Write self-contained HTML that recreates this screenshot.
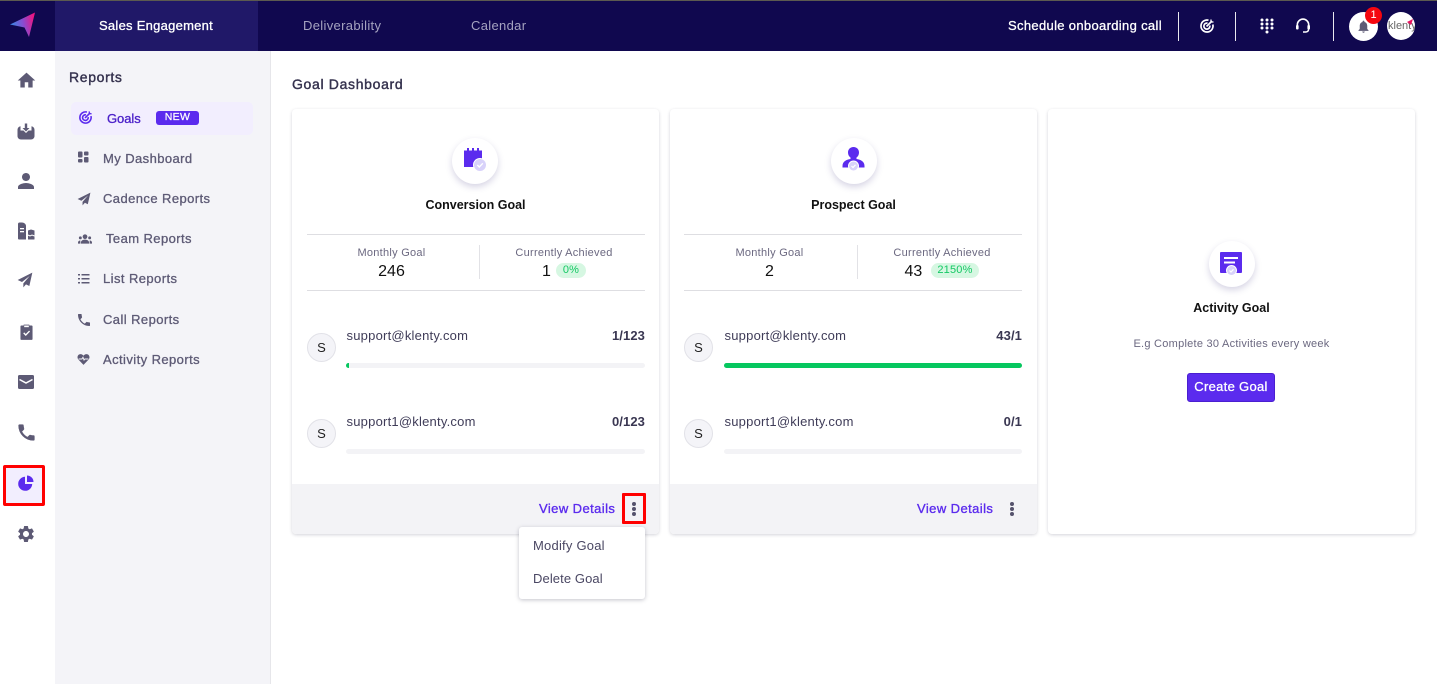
<!DOCTYPE html>
<html><head><meta charset="utf-8"><style>
html,body{margin:0;padding:0}
body{width:1437px;height:684px;position:relative;overflow:hidden;background:#fff;font-family:"Liberation Sans",sans-serif;color:#3a3752}
.a,.t{position:absolute}
.t{white-space:nowrap;line-height:16px}
svg{position:absolute;display:block}
.nav{font-size:13px;color:#5d5a75;letter-spacing:.42px;-webkit-text-stroke:.3px #5d5a75}
.card{position:absolute;top:109px;width:367px;height:425px;background:#fff;border-radius:4px;box-shadow:0 1px 3px rgba(40,40,70,.2);overflow:hidden}
.foot{position:absolute;left:0;right:0;top:375px;height:50px;background:#f3f3f6}
.hl{position:absolute;height:1px;background:#dedee2;width:338px}
.circ{position:absolute;width:46px;height:46px;border-radius:50%;background:#fff;box-shadow:0 3px 7px rgba(70,60,130,.22)}
.av{position:absolute;width:27px;height:27px;border:1px solid #e2e2e8;border-radius:50%;background:#f4f4f8;color:#222;font-size:13px;text-align:center;line-height:27px}
.bar{position:absolute;height:5px;border-radius:3px;background:#f3f3f6;overflow:hidden}
.mail{font-size:13px;color:#3f3c58;letter-spacing:.22px}
.ct{font-size:13px;font-weight:700;color:#3a3752;letter-spacing:.1px;text-align:right;right:14px}
.lb{font-size:11px;color:#6b6880;letter-spacing:.27px;text-align:center}
.nm{font-size:16px;color:#111;letter-spacing:0;text-align:center}
.ttl{font-size:12.5px;font-weight:700;color:#111;letter-spacing:0;text-align:center;left:0;right:0}
.vd{font-size:13px;color:#5b2bee;letter-spacing:.42px;-webkit-text-stroke:.35px #5b2bee}
.pill{position:absolute;height:15px;border-radius:8px;background:#d6f7e2;color:#14c864;font-size:11px;text-align:center;line-height:15px;letter-spacing:.2px}
.dot{position:absolute;width:4px;height:4px;border-radius:50%;background:#55526c}
</style></head><body>

<!-- top bar -->
<div class="a" style="left:0;top:0;width:1437px;height:51px;background:#10084f"></div>
<div class="a" style="left:0;top:0;width:1437px;height:1px;background:#5c5a50"></div>
<div class="a" style="left:55px;top:1px;width:203px;height:50px;background:#201868"></div>
<svg style="left:10px;top:12px" width="26" height="26" viewBox="0 0 26 26">
<defs><linearGradient id="g" x1="0" y1="0.6" x2="1" y2="0.4"><stop offset="0" stop-color="#2f8fe8"/><stop offset=".55" stop-color="#8a4bd0"/><stop offset="1" stop-color="#f0147f"/></linearGradient></defs>
<path d="M0 12.500L25 0.500L19 25L14.500 15.500Z" fill="url(#g)"/></svg>
<div class="t" style="left:99px;top:18px;font-size:13px;color:#fff;letter-spacing:.26px;-webkit-text-stroke:.3px #fff">Sales Engagement</div>
<div class="t" style="left:303px;top:18px;font-size:13px;color:#a5a3c0;letter-spacing:.33px">Deliverability</div>
<div class="t" style="left:471px;top:18px;font-size:13px;color:#a5a3c0;letter-spacing:.33px">Calendar</div>
<div class="t" style="left:1008px;top:18px;font-size:13px;color:#fff;letter-spacing:.33px;-webkit-text-stroke:.3px #fff">Schedule onboarding call</div>
<div class="a" style="left:1178px;top:12px;width:1px;height:29px;background:#e8e8ee"></div>
<div class="a" style="left:1235px;top:12px;width:1px;height:29px;background:#e8e8ee"></div>
<div class="a" style="left:1333px;top:12px;width:1px;height:29px;background:#e8e8ee"></div>
<svg style="left:1199px;top:18px" width="16" height="16" viewBox="0 0 16 16" fill="none" stroke="#fff" stroke-width="1.700"><path d="M13.800 6.500A6 6 0 1 1 9.500 2.200"/><path d="M10.800 7.500A3 3 0 1 1 8.500 5.200"/><path d="M7.500 8.500L13 3"/><path d="M12 1.500v2.500h2.500" stroke-width="1.300"/></svg>
<svg style="left:1260px;top:18px" width="14" height="16" viewBox="0 0 14 16" fill="#fff"><circle cx="2" cy="2" r="1.500"/><circle cx="7" cy="2" r="1.500"/><circle cx="12" cy="2" r="1.500"/><circle cx="2" cy="6" r="1.500"/><circle cx="7" cy="6" r="1.500"/><circle cx="12" cy="6" r="1.500"/><circle cx="2" cy="10" r="1.500"/><circle cx="7" cy="10" r="1.500"/><circle cx="12" cy="10" r="1.500"/><circle cx="7" cy="14" r="1.500"/></svg>
<svg style="left:1295px;top:18px" width="16" height="16" viewBox="0 0 16 16" fill="none" stroke="#fff" stroke-width="1.600"><path d="M2.300 8V6.800a5.700 5.700 0 0 1 11.400 0V8"/><path d="M13.500 11.500c0 1.500-1.300 2.500-2.800 2.500H8"/><rect x="1" y="7" width="2.600" height="4.500" rx="1" fill="#fff" stroke="none"/><rect x="12.400" y="7" width="2.600" height="4.500" rx="1" fill="#fff" stroke="none"/></svg>
<div class="a" style="left:1349px;top:12px;width:29px;height:29px;border-radius:50%;background:#fff"></div>
<svg style="left:1356px;top:19px" width="15" height="15" viewBox="0 0 24 24" fill="#5d5a75"><path d="M12 22c1.100 0 2-.9 2-2h-4c0 1.100.9 2 2 2zm6-6v-5c0-3.100-1.600-5.600-4.500-6.300V4c0-.8-.7-1.500-1.500-1.500s-1.500.7-1.500 1.500v.7C7.600 5.400 6 7.900 6 11v5l-2 2v1h16v-1z"/></svg>
<div class="a" style="left:1365px;top:7px;width:17px;height:17px;border-radius:50%;background:#f5060f;color:#fff;font-size:11px;text-align:center;line-height:17px">1</div>
<div class="a" style="left:1387px;top:12px;width:28px;height:28px;border-radius:50%;background:#fff;overflow:hidden"><div class="t" style="left:1px;top:6px;font-size:11px;color:#666">klenty</div><svg style="left:20px;top:7px" width="6" height="6" viewBox="0 0 6 6"><path d="M0 3L6 0L4 6Z" fill="#e8145f"/></svg></div>

<!-- subnav -->
<div class="a" style="left:55px;top:51px;width:215px;height:633px;background:#f4f4f8"></div>
<div class="a" style="left:270px;top:51px;width:1px;height:633px;background:#e6e6ea"></div>
<div class="t" style="left:69px;top:69px;font-size:14px;color:#35324e;letter-spacing:.65px;-webkit-text-stroke:.4px #35324e">Reports</div>
<div class="a" style="left:71px;top:102px;width:182px;height:33px;border-radius:5px;background:#f2eefe"></div>
<svg style="left:78px;top:110px" width="15" height="15" viewBox="0 0 16 16" fill="none" stroke="#5b2bee" stroke-width="1.700"><path d="M13.800 6.500A6 6 0 1 1 9.500 2.200"/><path d="M10.800 7.500A3 3 0 1 1 8.500 5.200"/><path d="M7.500 8.500L13 3"/><path d="M12 1.500v2.500h2.500" stroke-width="1.300"/></svg>
<div class="t" style="left:107px;top:110.500px;font-size:13px;color:#4b20c9;letter-spacing:-.05px;-webkit-text-stroke:.3px #4b20c9">Goals</div>
<div class="a" style="left:156px;top:111px;width:43px;height:14px;border-radius:3px;background:#5b2bee;color:#fff;font-size:10.500px;text-align:center;line-height:13px;letter-spacing:.3px;-webkit-text-stroke:.25px #fff">NEW</div>

<svg style="left:77px;top:151px" width="12" height="12" viewBox="0 0 12 12" fill="#5d5a75"><rect x="1" y="0.500" width="4.500" height="6" rx="1"/><rect x="7" y="0.500" width="4.500" height="4" rx="1"/><rect x="1" y="8" width="4.500" height="3.500" rx="1"/><rect x="7" y="6" width="4.500" height="5.500" rx="1"/></svg>
<div class="t nav" style="left:103px;top:150.500px">My Dashboard</div>
<svg style="left:77px;top:192px" width="14" height="14" viewBox="0 0 24 24" fill="#5d5a75"><path d="M23 1L1 12l6.500 3L19 6 9.500 17v6l4-4.500 5 2.500z"/></svg>
<div class="t nav" style="left:103px;top:190.500px">Cadence Reports</div>
<svg style="left:78px;top:232px" width="14" height="14" viewBox="0 0 24 24" fill="#5d5a75"><circle cx="12" cy="8" r="4"/><circle cx="4" cy="10" r="2.500"/><circle cx="20" cy="10" r="2.500"/><path d="M5 20v-2c0-3 3-5 7-5s7 2 7 5v2zM0 18c0-2 1.500-3.500 4-3.500v5.500H0zM24 18c0-2-1.500-3.500-4-3.500v5.500h4z"/></svg>
<div class="t nav" style="left:106px;top:230.500px">Team Reports</div>
<svg style="left:78px;top:273px" width="12" height="12" viewBox="0 0 12 12" fill="#5d5a75"><rect x="0" y="1" width="2" height="1.500"/><rect x="3.500" y="1" width="8" height="1.500"/><rect x="0" y="5" width="2" height="1.500"/><rect x="3.500" y="5" width="8" height="1.500"/><rect x="0" y="9" width="2" height="1.500"/><rect x="3.500" y="9" width="8" height="1.500"/></svg>
<div class="t nav" style="left:103px;top:270.500px">List Reports</div>
<svg style="left:76px;top:312px" width="16" height="16" viewBox="0 0 24 24" fill="#5d5a75"><path d="M6.620 10.790c1.440 2.830 3.760 5.140 6.590 6.590l2.200-2.200c.27-.27.67-.36 1.020-.24 1.120.37 2.330.57 3.570.57.55 0 1 .45 1 1V20c0 .55-.45 1-1 1-9.390 0-17-7.610-17-17 0-.55.45-1 1-1h3.500c.55 0 1 .45 1 1 0 1.250.2 2.450.57 3.570.11.35.03.74-.25 1.020l-2.200 2.200z"/></svg>
<div class="t nav" style="left:103px;top:311.500px">Call Reports</div>
<svg style="left:77px;top:353px" width="13" height="13" viewBox="0 0 24 24" fill="#5d5a75"><path d="M12 22L2.500 12C-1 7.500 2 2 6.500 2c2.500 0 4.300 1.200 5.500 3 1.200-1.800 3-3 5.500-3C22 2 25 7.500 21.500 12z"/><path d="M3 11h6l2-3 2 5 1.500-2H21" stroke="#f4f4f8" stroke-width="1.800" fill="none"/></svg>
<div class="t nav" style="left:103px;top:351.500px">Activity Reports</div>

<!-- rail -->
<svg style="left:15.500px;top:69.500px" width="21" height="21" viewBox="0 0 24 24" fill="#5d5a75"><path d="M10 20v-6h4v6h5v-8h3L12 3 2 12h3v8z"/></svg>
<svg style="left:16px;top:121px" width="20" height="20" viewBox="0 0 20 20" fill="#5d5a75"><path d="M1.500 9c0-2 1.200-3.500 3-3.800V9.500h3L10 12l2.500-2.500h3V5.200c1.800.3 3 1.800 3 3.800v6c0 2-1.500 3.500-3.500 3.500H5c-2 0-3.500-1.500-3.500-3.500z"/><path d="M8.800 2.500h2.400v4.500h2.300L10 10.500 6.500 7h2.300z"/></svg>
<svg style="left:14px;top:169px" width="24" height="24" viewBox="0 0 24 24" fill="#5d5a75"><path d="M12 12c2.210 0 4-1.790 4-4s-1.790-4-4-4-4 1.790-4 4 1.790 4 4 4zm0 2c-2.670 0-8 1.340-8 4v2h16v-2c0-2.660-5.330-4-8-4z"/></svg>
<svg style="left:17px;top:222px" width="18" height="18" viewBox="0 0 18 18" fill="#5d5a75"><path d="M1 2c0-1 .7-1.500 1.500-1.500H5c2 0 4 1.500 4 3.500v13.500H2c-.6 0-1-.4-1-1z"/><path d="M11 8.500l3-1 3.500 1V17c0 .3-.2.5-.5.5h-6z"/><rect x="3" y="6" width="4" height="1.300" fill="#fff"/><rect x="3" y="9" width="4" height="1.300" fill="#fff"/><path d="M11 13l2 1 2-1 2.500 1" stroke="#fff" stroke-width="1" fill="none"/></svg>
<svg style="left:16.500px;top:272px" width="16" height="16" viewBox="0 0 24 24" fill="#5d5a75"><path d="M23 1L1 12l6.500 3L19 6 9.500 17v6l4-4.500 5 2.500z"/></svg>
<svg style="left:19.500px;top:323px" width="13" height="18" viewBox="0 0 14 18" fill="#5d5a75"><path d="M1.500 2H4V1h6v1h2.500c.6 0 1 .4 1 1v13.500c0 .6-.4 1-1 1h-11c-.6 0-1-.4-1-1V3c0-.6.4-1 1-1z"/><path d="M4 10l2.200 2.200L10.300 8" stroke="#fff" stroke-width="1.500" fill="none"/><rect x="4.500" y="2" width="5" height="1.800" fill="#fff"/></svg>
<svg style="left:18px;top:375px" width="16" height="14" viewBox="0 0 16 14" fill="#5d5a75"><rect width="16" height="14" rx="1.500"/><path d="M1.500 4.500L8 8l6.500-3.500" stroke="#fff" stroke-width="1.500" fill="none"/></svg>
<svg style="left:15.500px;top:422px" width="21" height="21" viewBox="0 0 24 24" fill="#5d5a75" stroke="#5d5a75" stroke-width=".6"><path d="M6.620 10.790c1.440 2.830 3.760 5.140 6.590 6.590l2.200-2.200c.27-.27.67-.36 1.020-.24 1.120.37 2.330.57 3.570.57.55 0 1 .45 1 1V20c0 .55-.45 1-1 1-9.390 0-17-7.610-17-17 0-.55.45-1 1-1h3.500c.55 0 1 .45 1 1 0 1.250.2 2.450.57 3.570.11.35.03.74-.25 1.020l-2.200 2.200z"/></svg>
<div class="a" style="left:3px;top:465px;width:36px;height:35px;border:3px solid #ff0000;border-radius:2px;background:#f2eefe"></div>
<svg style="left:18px;top:475px" width="16" height="16" viewBox="0 0 16 16" fill="#5b2bee"><path d="M7 1.800A7 7 0 1 0 14.200 9H7z"/><path d="M9 0.500A6.500 6.500 0 0 1 15.500 7H9z"/></svg>
<svg style="left:16px;top:523.500px" width="20" height="20" viewBox="0 0 24 24" fill="#5d5a75"><path d="M19.140 12.940c.04-.3.06-.61.06-.94 0-.32-.02-.64-.07-.94l2.030-1.580c.18-.14.23-.41.120-.61l-1.920-3.320c-.12-.22-.37-.29-.59-.22l-2.390.96c-.5-.38-1.030-.7-1.620-.94l-.36-2.540c-.04-.24-.24-.41-.48-.41h-3.840c-.24 0-.43.17-.47.41l-.36 2.540c-.59.24-1.130.57-1.620.94l-2.390-.96c-.22-.08-.47 0-.59.22L2.740 8.870c-.12.21-.08.47.12.61l2.030 1.580c-.05.3-.09.63-.09.94s.02.64.07.94l-2.030 1.580c-.18.14-.23.41-.12.61l1.920 3.320c.12.22.37.29.59.22l2.390-.96c.5.38 1.030.7 1.620.94l.36 2.540c.05.24.24.41.48.41h3.840c.24 0 .44-.17.47-.41l.36-2.540c.59-.24 1.130-.56 1.620-.94l2.390.96c.22.08.47 0 .59-.22l1.920-3.320c.12-.22.07-.47-.12-.61l-2.010-1.580zM12 15.600c-1.980 0-3.600-1.620-3.600-3.600s1.620-3.600 3.600-3.600 3.600 1.620 3.600 3.600-1.620 3.600-3.600 3.600z"/></svg>

<div class="t" style="left:292px;top:76px;font-size:14px;color:#35324e;letter-spacing:.67px;-webkit-text-stroke:.4px #35324e">Goal Dashboard</div>

<!-- card 1 -->
<div class="card" style="left:292px">
<div class="foot"></div>
<div class="circ" style="left:160px;top:29px"></div>
<svg style="left:172px;top:39px" width="24" height="25" viewBox="0 0 24 25"><path d="M0 2.500h3V0h2v2.500h3V0h2v2.500h3V0h2v2.500h3V19H0z" fill="#5b2bee"/><circle cx="16" cy="17" r="7" fill="#fff"/><circle cx="16" cy="17" r="6" fill="#d8d2fa"/><path d="M13.300 17l2 2 3.500-3.700" stroke="#fff" stroke-width="1.400" fill="none"/></svg>
<div class="t ttl" style="top:88px">Conversion Goal</div>
<div class="hl" style="left:15px;top:125px"></div>
<div class="a" style="left:187px;top:136px;width:1px;height:34px;background:#e2e2e6"></div>
<div class="t lb" style="left:14px;width:171px;top:136px">Monthly Goal</div>
<div class="t nm" style="left:14px;width:171px;top:155px">246</div>
<div class="t lb" style="left:188px;width:168px;top:136px">Currently Achieved</div>
<div class="t nm" style="left:250px;top:155px">1</div>
<div class="pill" style="left:264px;top:154px;width:30px">0%</div>
<div class="hl" style="left:15px;top:181px"></div>
<div class="av" style="left:15px;top:224px">S</div>
<div class="t mail" style="left:54.500px;top:219px">support@klenty.com</div>
<div class="t ct" style="top:219px">1/123</div>
<div class="bar" style="left:54px;width:299px;top:254px"><div class="a" style="left:0;top:0;width:3px;height:5px;background:#06c75f"></div></div>
<div class="av" style="left:15px;top:310px">S</div>
<div class="t mail" style="left:54.500px;top:305px">support1@klenty.com</div>
<div class="t ct" style="top:305px">0/123</div>
<div class="bar" style="left:54px;width:299px;top:340px"></div>
<div class="t vd" style="left:247px;top:392px">View Details</div>
<div class="a" style="left:330px;top:384px;width:18px;height:25px;border:3px solid #ff0000;border-radius:1px"></div>
<div class="dot" style="left:340px;top:393px"></div><div class="dot" style="left:340px;top:398px"></div><div class="dot" style="left:340px;top:403px"></div>
</div>

<!-- card 2 -->
<div class="card" style="left:670px">
<div class="foot"></div>
<div class="circ" style="left:160.500px;top:29px"></div>
<svg style="left:172px;top:38px" width="23" height="24" viewBox="0 0 23 24"><path d="M11.500 0c3.500 0 5.500 2.500 5.500 5.500 0 2.300-1 4-2.500 5v1.500c3.500.5 8 2 8 7v1.500H.5V19c0-5 4.500-6.500 8-7v-1.500C7 9.500 6 7.800 6 5.500 6 2.500 8 0 11.500 0z" fill="#5b2bee"/><circle cx="11.500" cy="19" r="5.500" fill="#fff"/><circle cx="11.500" cy="19" r="4.500" fill="#d8d2fa"/><path d="M9.500 19l1.500 1.500 2.500-2.700" stroke="#fff" stroke-width="1.200" fill="none"/></svg>
<div class="t ttl" style="top:88px">Prospect Goal</div>
<div class="hl" style="left:14px;top:125px"></div>
<div class="a" style="left:187px;top:136px;width:1px;height:34px;background:#e2e2e6"></div>
<div class="t lb" style="left:14px;width:171px;top:136px">Monthly Goal</div>
<div class="t nm" style="left:14px;width:171px;top:155px">2</div>
<div class="t lb" style="left:188px;width:168px;top:136px">Currently Achieved</div>
<div class="t nm" style="left:234.500px;top:155px">43</div>
<div class="pill" style="left:261px;top:154px;width:48px">2150%</div>
<div class="hl" style="left:14px;top:181px"></div>
<div class="av" style="left:14px;top:224px">S</div>
<div class="t mail" style="left:54.500px;top:219px">support@klenty.com</div>
<div class="t ct" style="top:219px;right:15px">43/1</div>
<div class="bar" style="left:54px;width:298px;top:254px"><div class="a" style="left:0;top:0;width:298px;height:5px;background:#06c75f"></div></div>
<div class="av" style="left:14px;top:310px">S</div>
<div class="t mail" style="left:54.500px;top:305px">support1@klenty.com</div>
<div class="t ct" style="top:305px;right:15px">0/1</div>
<div class="bar" style="left:54px;width:298px;top:340px"></div>
<div class="t vd" style="left:247px;top:392px">View Details</div>
<div class="dot" style="left:340px;top:393px"></div><div class="dot" style="left:340px;top:398px"></div><div class="dot" style="left:340px;top:403px"></div>
</div>

<!-- card 3 -->
<div class="card" style="left:1048px">
<div class="circ" style="left:161px;top:132px"></div>
<svg style="left:172px;top:143px" width="23" height="24" viewBox="0 0 23 24"><path d="M1 0h20c.6 0 1 .4 1 1v19c0 .6-.4 1-1 1H1c-.6 0-1-.4-1-1V1c0-.6.4-1 1-1z" fill="#5b2bee"/><rect x="4" y="5" width="14" height="2" fill="#fff"/><rect x="4" y="9.500" width="11" height="2" fill="#fff"/><circle cx="11.500" cy="18.500" r="5.500" fill="#fff"/><circle cx="11.500" cy="18.500" r="4.500" fill="#d8d2fa"/><path d="M9.500 18.500l1.500 1.500 2.500-2.700" stroke="#fff" stroke-width="1.200" fill="none"/></svg>
<div class="t ttl" style="top:191px">Activity Goal</div>
<div class="t" style="left:0;right:0;top:227px;text-align:center;font-size:11px;color:#6b6880;letter-spacing:.26px">E.g Complete 30 Activities every week</div>
<div class="a" style="left:139px;top:264px;width:86px;height:27px;border:1px solid #4a1fd0;border-radius:3px;background:#5b2bee;color:#fff;font-size:13px;text-align:center;line-height:25px;letter-spacing:.3px;-webkit-text-stroke:.3px #fff">Create Goal</div>
</div>

<!-- dropdown -->
<div class="a" style="left:519px;top:527px;width:126px;height:72px;border-radius:3px;background:#fff;box-shadow:0 1px 4px rgba(40,40,70,.28)"></div>
<div class="t" style="left:533px;top:537.500px;font-size:13px;color:#4a4763;letter-spacing:.22px">Modify Goal</div>
<div class="t" style="left:533px;top:570.500px;font-size:13px;color:#4a4763;letter-spacing:.1px">Delete Goal</div>
</body></html>
